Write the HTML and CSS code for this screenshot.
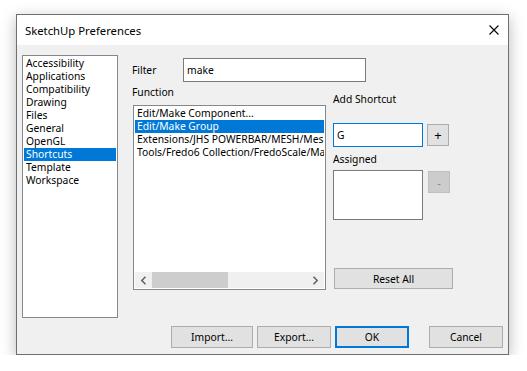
FILE: index.html
```html
<!DOCTYPE html>
<html>
<head>
<meta charset="utf-8">
<link rel="stylesheet" href="styles.css">
</head>
<body>
<div class="window">
  <div class="titlebar">
    <span class="title">SketchUp Preferences</span>
    <svg class="close" width="10" height="10" viewBox="0 0 10 10"><path d="M0.5 0.5 L9.5 9.5 M9.5 0.5 L0.5 9.5" stroke="#000" stroke-width="1.1" fill="none"/></svg>
  </div>
  <div class="content">
    <div class="main">
      <ul class="cat-list">
        <li>Accessibility</li>
        <li>Applications</li>
        <li>Compatibility</li>
        <li>Drawing</li>
        <li>Files</li>
        <li>General</li>
        <li>OpenGL</li>
        <li class="sel">Shortcuts</li>
        <li>Template</li>
        <li>Workspace</li>
      </ul>
      <div class="panel">
        <div class="filter-row">
          <span class="filter-label">Filter</span>
          <div class="text-input filter-input">make</div>
        </div>
        <div class="cols">
          <div class="func-col">
            <div class="label func-label">Function</div>
            <div class="func-list">
              <ul class="items">
                <li>Edit/Make Component...</li>
                <li class="sel">Edit/Make Group</li>
                <li>Extensions/JHS POWERBAR/MESH/Mesh Group</li>
                <li>Tools/Fredo6 Collection/FredoScale/Make Group</li>
              </ul>
              <div class="hscroll">
                <div class="arrow"><svg width="7" height="9" viewBox="0 0 7 9"><path d="M5.5 0.8 L1.8 4.5 L5.5 8.2" stroke="#606060" stroke-width="1.5" fill="none"/></svg></div>
                <div class="track"><div class="thumb"></div></div>
                <div class="arrow"><svg width="7" height="9" viewBox="0 0 7 9"><path d="M1.5 0.8 L5.2 4.5 L1.5 8.2" stroke="#606060" stroke-width="1.5" fill="none"/></svg></div>
              </div>
            </div>
          </div>
          <div class="short-col">
            <div class="label short-label">Add Shortcut</div>
            <div class="shortcut-row">
              <div class="text-input key-input">G</div>
              <div class="btn small-btn">+</div>
            </div>
            <div class="label assigned-label">Assigned</div>
            <div class="assigned-row">
              <div class="assigned-box"></div>
              <div class="btn small-btn disabled">-</div>
            </div>
            <div class="btn reset-btn">Reset All</div>
          </div>
        </div>
      </div>
    </div>
    <div class="buttons">
      <div class="btn import-btn">Import...</div>
      <div class="btn export-btn">Export...</div>
      <div class="btn ok-btn">OK</div>
      <div class="btn cancel-btn">Cancel</div>
    </div>
  </div>
</div>
</body>
</html>
```
FILE: styles.css
```css
* { box-sizing: border-box; }
html, body { margin: 0; }
body {
  background: #ffffff;
  padding: 14px 0 0 16px;
  font-family: "Noto Sans", sans-serif;
  font-size: 10.3px;
  color: #000;
}
.window {
  width: 493px;
  height: 341px;
  border: 1px solid #6f6f6f;
  background: #f0f0f0;
  display: flex;
  flex-direction: column;
  box-shadow: 0 4px 14px rgba(0, 0, 0, 0.28);
}
.titlebar {
  height: 30px;
  flex: none;
  background: #fff;
  display: flex;
  align-items: center;
  justify-content: space-between;
  padding: 0 9px 0 8px;
}
.title { font-size: 11.3px; }
.content {
  flex: 1;
  display: flex;
  flex-direction: column;
  padding: 10px 5px 6px 5px;
}
.main { display: flex; height: 263px; flex: none; }
.cat-list {
  width: 96px;
  height: 263px;
  margin: 0;
  padding: 1px;
  list-style: none;
  background: #fff;
  border: 1px solid #828790;
}
.cat-list li, .items li {
  height: 13px;
  line-height: 13px;
  padding-left: 2px;
  white-space: nowrap;
  overflow: hidden;
}
.sel { background: #0078d7; color: #fff; }
.panel { margin-left: 14px; flex: 1; }
.filter-row { display: flex; align-items: center; height: 24px; margin-top: 3px; }
.filter-label { width: 51px; }
.text-input {
  height: 24px;
  background: #fff;
  border: 1px solid #7a7a7a;
  display: flex;
  align-items: center;
  padding: 0 3px;
}
.filter-input { width: 183px; }
.cols { display: flex; margin-top: 1px; }
.label { line-height: 14px; }
.func-col { width: 194px; }
.func-label { margin-top: 2px; }
.func-list {
  margin: 6px 0 0 1px;
  width: 193px;
  height: 185px;
  background: #fff;
  border: 1px solid #828790;
  padding: 1px;
  display: flex;
  flex-direction: column;
}
.items { flex: 1; margin: 0; padding: 0; list-style: none; overflow: hidden; }
.hscroll { height: 16px; background: #f0f0f0; display: flex; }
.arrow { width: 17px; display: flex; align-items: center; justify-content: center; }
.track { flex: 1; display: flex; }
.thumb { width: 76px; background: #cdcdcd; }
.short-col { margin-left: 7px; }
.short-label { margin-top: 9px; }
.shortcut-row { display: flex; align-items: center; margin-top: 17px; }
.key-input { width: 90px; border-color: #0078d7; }
.btn {
  background: #e1e1e1;
  border: 1px solid #adadad;
  display: flex;
  align-items: center;
  justify-content: center;
}
.small-btn { width: 22px; height: 22px; margin-left: 4px; font-size: 13px; }
.small-btn.disabled { background: #cccccc; border-color: #bfbfbf; color: #838383; margin-left: 5px; margin-top: 1px; font-size: 11px; }
.assigned-label { margin-top: 5px; }
.assigned-row { display: flex; align-items: flex-start; margin-top: 4px; }
.assigned-box { width: 90px; height: 50px; background: #fff; border: 1px solid #7a7a7a; }
.reset-btn { width: 119px; height: 21px; margin: 48px 0 0 1px; }
.buttons { display: flex; justify-content: flex-end; margin-top: 8px; height: 22px; }
.buttons .btn { height: 22px; width: 74px; }
.buttons .import-btn { width: 82px; }
.export-btn, .ok-btn { margin-left: 4px; }
.ok-btn { border: 2px solid #0078d7; }
.cancel-btn { margin-left: 20px; }
```
